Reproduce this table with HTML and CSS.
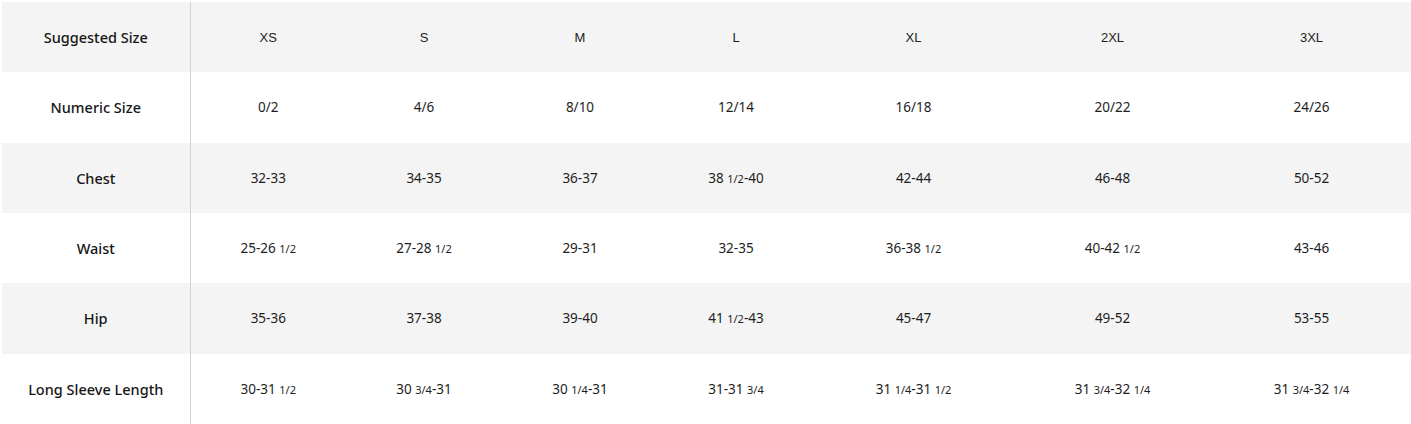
FILE: index.html
```html
<!DOCTYPE html>
<html lang="en">
<head>
<meta charset="utf-8">
<title>Size Chart</title>
<link rel="stylesheet" href="styles.css">
</head>
<body>
<table class="size-table">
  <colgroup>
    <col class="c-label"><col class="c-sm"><col class="c-sm"><col class="c-sm"><col class="c-sm"><col class="c-lg"><col class="c-lg"><col class="c-lg">
  </colgroup>
  <tbody>
    <tr class="shaded head">
      <th>Suggested Size</th>
      <td>XS</td><td>S</td><td>M</td><td>L</td><td>XL</td><td>2XL</td><td>3XL</td>
    </tr>
    <tr>
      <th>Numeric Size</th>
      <td>0/2</td><td>4/6</td><td>8/10</td><td>12/14</td><td>16/18</td><td>20/22</td><td>24/26</td>
    </tr>
    <tr class="shaded">
      <th>Chest</th>
      <td>32-33</td><td>34-35</td><td>36-37</td><td>38 <span class="frac">1/2</span>-40</td><td>42-44</td><td>46-48</td><td>50-52</td>
    </tr>
    <tr>
      <th>Waist</th>
      <td>25-26 <span class="frac">1/2</span></td><td>27-28 <span class="frac">1/2</span></td><td>29-31</td><td>32-35</td><td>36-38 <span class="frac">1/2</span></td><td>40-42 <span class="frac">1/2</span></td><td>43-46</td>
    </tr>
    <tr class="shaded">
      <th>Hip</th>
      <td>35-36</td><td>37-38</td><td>39-40</td><td>41 <span class="frac">1/2</span>-43</td><td>45-47</td><td>49-52</td><td>53-55</td>
    </tr>
    <tr>
      <th>Long Sleeve Length</th>
      <td>30-31 <span class="frac">1/2</span></td><td>30 <span class="frac">3/4</span>-31</td><td>30 <span class="frac">1/4</span>-31</td><td>31-31 <span class="frac">3/4</span></td><td>31 <span class="frac">1/4</span>-31 <span class="frac">1/2</span></td><td>31 <span class="frac">3/4</span>-32 <span class="frac">1/4</span></td><td>31 <span class="frac">3/4</span>-32 <span class="frac">1/4</span></td>
    </tr>
  </tbody>
</table>
</body>
</html>
```

FILE: styles.css
```css
html, body {
  margin: 0;
  padding: 0;
  background: #ffffff;
}

body {
  padding: 2px 2px 0 2px;
  font-family: "Noto Sans", "Open Sans", Arial, sans-serif;
  color: #1c1c1c;
}

.size-table {
  border-collapse: collapse;
  table-layout: fixed;
  width: 1407px;
}

.c-label { width: 188px; }
.c-sm { width: 156px; }
.c-lg { width: 199px; }

.size-table tr {
  height: 70.34px;
}

.size-table tr.shaded {
  background: #f4f4f4;
}

.size-table th {
  font-weight: 500;
  font-size: 14.5px;
  text-align: center;
  vertical-align: middle;
  padding: 0;
  border-right: 1px solid #d2d2d2;
  color: #161616;
}

.size-table td {
  font-size: 13.5px;
  font-weight: 400;
  text-align: center;
  vertical-align: middle;
  padding: 0;
  color: #1e1e1e;
}

.size-table tr.head td {
  font-family: "Liberation Sans", Arial, sans-serif;
  font-size: 13px;
}

.frac {
  font-size: 11px;
}
```
